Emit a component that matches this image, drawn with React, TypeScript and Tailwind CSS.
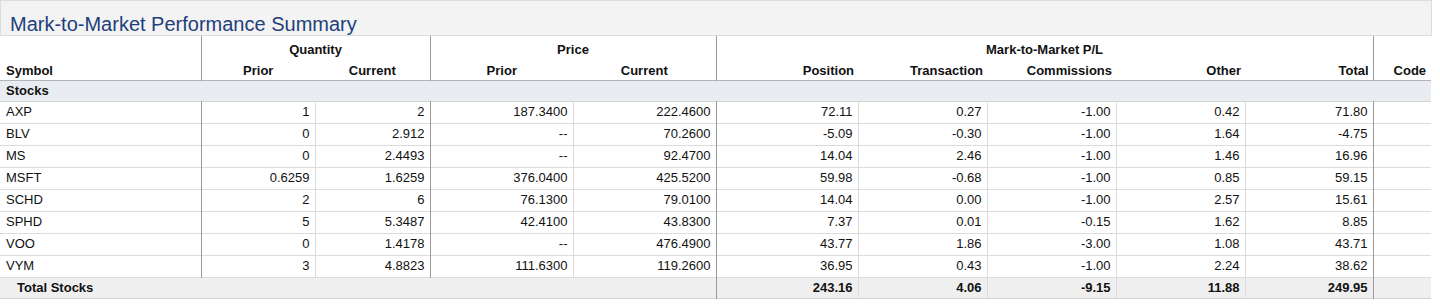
const ROWS = [
  { sym: "AXP", qp: "1", qc: "2", pp: "187.3400", pc: "222.4600", pos: "72.11", tr: "0.27", com: "-1.00", oth: "0.42", tot: "71.80" },
  { sym: "BLV", qp: "0", qc: "2.912", pp: "--", pc: "70.2600", pos: "-5.09", tr: "-0.30", com: "-1.00", oth: "1.64", tot: "-4.75" },
  { sym: "MS", qp: "0", qc: "2.4493", pp: "--", pc: "92.4700", pos: "14.04", tr: "2.46", com: "-1.00", oth: "1.46", tot: "16.96" },
  { sym: "MSFT", qp: "0.6259", qc: "1.6259", pp: "376.0400", pc: "425.5200", pos: "59.98", tr: "-0.68", com: "-1.00", oth: "0.85", tot: "59.15" },
  { sym: "SCHD", qp: "2", qc: "6", pp: "76.1300", pc: "79.0100", pos: "14.04", tr: "0.00", com: "-1.00", oth: "2.57", tot: "15.61" },
  { sym: "SPHD", qp: "5", qc: "5.3487", pp: "42.4100", pc: "43.8300", pos: "7.37", tr: "0.01", com: "-0.15", oth: "1.62", tot: "8.85" },
  { sym: "VOO", qp: "0", qc: "1.4178", pp: "--", pc: "476.4900", pos: "43.77", tr: "1.86", com: "-3.00", oth: "1.08", tot: "43.71" },
  { sym: "VYM", qp: "3", qc: "4.8823", pp: "111.6300", pc: "119.2600", pos: "36.95", tr: "0.43", com: "-1.00", oth: "2.24", tot: "38.62" },
];

const WIDTHS = [201, 114, 115, 143, 143, 142, 129, 129, 129, 128, 58];

// group edges get the darker rule, inner columns the light one
const dark = "border-r border-r-[#9a9a9a]";
const light = "border-r border-r-[#dcdcdc]";

export default function App() {
  return (
    <div className="w-[1440px] bg-white font-['Liberation_Sans',Arial,sans-serif] text-[13px] text-[#111]">
      {/* Title */}
      <div className="h-9 w-[1432px] border border-[#dcdcdc] bg-[#f3f3f3] pl-[9px] pt-[8px]">
        <h2 className="text-[20px] leading-normal text-[#1d3f7b]">Mark-to-Market Performance Summary</h2>
      </div>

      <table className="w-[1431px] table-fixed border-collapse leading-[15px]">
        <colgroup>
          {WIDTHS.map((w, i) => (
            <col key={i} style={{ width: w }} />
          ))}
        </colgroup>
        <thead>
          <tr className="h-[22px] font-bold">
            <th className={`${dark} p-0`} />
            <th colSpan={2} className={`${dark} p-0 pb-[1px] text-center align-bottom`}>Quantity</th>
            <th colSpan={2} className={`${dark} p-0 pb-[1px] text-center align-bottom`}>Price</th>
            <th colSpan={5} className={`${dark} p-0 pb-[1px] text-center align-bottom`}>Mark-to-Market P/L</th>
            <th className="p-0" />
          </tr>
          <tr className="h-[22px] border-b border-b-[#b5b5b5] font-bold">
            <th className={`${dark} p-0 pb-[2px] pl-[6px] text-left align-bottom`}>Symbol</th>
            <th className="p-0 pb-[2px] text-center align-bottom">Prior</th>
            <th className={`${dark} p-0 pb-[2px] text-center align-bottom`}>Current</th>
            <th className="p-0 pb-[2px] text-center align-bottom">Prior</th>
            <th className={`${dark} p-0 pb-[2px] text-center align-bottom`}>Current</th>
            <th className="p-0 pb-[2px] pr-[4px] text-right align-bottom">Position</th>
            <th className="p-0 pb-[2px] pr-[4px] text-right align-bottom">Transaction</th>
            <th className="p-0 pb-[2px] pr-[4px] text-right align-bottom">Commissions</th>
            <th className="p-0 pb-[2px] pr-[4px] text-right align-bottom">Other</th>
            <th className={`${dark} p-0 pb-[2px] pr-[4px] text-right align-bottom`}>Total</th>
            <th className="p-0 pb-[2px] pr-[5px] text-right align-bottom">Code</th>
          </tr>
        </thead>
        <tbody>
          <tr className="h-[21px] border-b border-b-[#d4d4d4] bg-[#e9edf2]">
            <td colSpan={11} className="p-0 pl-[6px] font-bold">Stocks</td>
          </tr>
          {ROWS.map((r) => (
            <tr key={r.sym} className="h-[22px] border-b border-b-[#dcdcdc]">
              <td className={`${dark} p-0 pb-[1px] pl-[6px]`}>{r.sym}</td>
              <td className={`${light} p-0 pb-[1px] pr-[5px] text-right`}>{r.qp}</td>
              <td className={`${dark} p-0 pb-[1px] pr-[5px] text-right`}>{r.qc}</td>
              <td className={`${light} p-0 pb-[1px] pr-[5px] text-right`}>{r.pp}</td>
              <td className={`${dark} p-0 pb-[1px] pr-[5px] text-right`}>{r.pc}</td>
              <td className={`${light} p-0 pb-[1px] pr-[5px] text-right`}>{r.pos}</td>
              <td className={`${light} p-0 pb-[1px] pr-[5px] text-right`}>{r.tr}</td>
              <td className={`${light} p-0 pb-[1px] pr-[5px] text-right`}>{r.com}</td>
              <td className={`${light} p-0 pb-[1px] pr-[5px] text-right`}>{r.oth}</td>
              <td className={`${dark} p-0 pb-[1px] pr-[5px] text-right`}>{r.tot}</td>
              <td className="p-0" />
            </tr>
          ))}
          <tr className="h-[21px] border-b border-b-[#d4d4d4] bg-[#efefef] font-bold">
            <td colSpan={5} className={`${dark} p-0 pl-[17px]`}>Total Stocks</td>
            <td className={`${light} p-0 pr-[5px] text-right`}>243.16</td>
            <td className={`${light} p-0 pr-[5px] text-right`}>4.06</td>
            <td className={`${light} p-0 pr-[5px] text-right`}>-9.15</td>
            <td className={`${light} p-0 pr-[5px] text-right`}>11.88</td>
            <td className={`${dark} p-0 pr-[5px] text-right`}>249.95</td>
            <td className="p-0" />
          </tr>
        </tbody>
      </table>
    </div>
  );
}
